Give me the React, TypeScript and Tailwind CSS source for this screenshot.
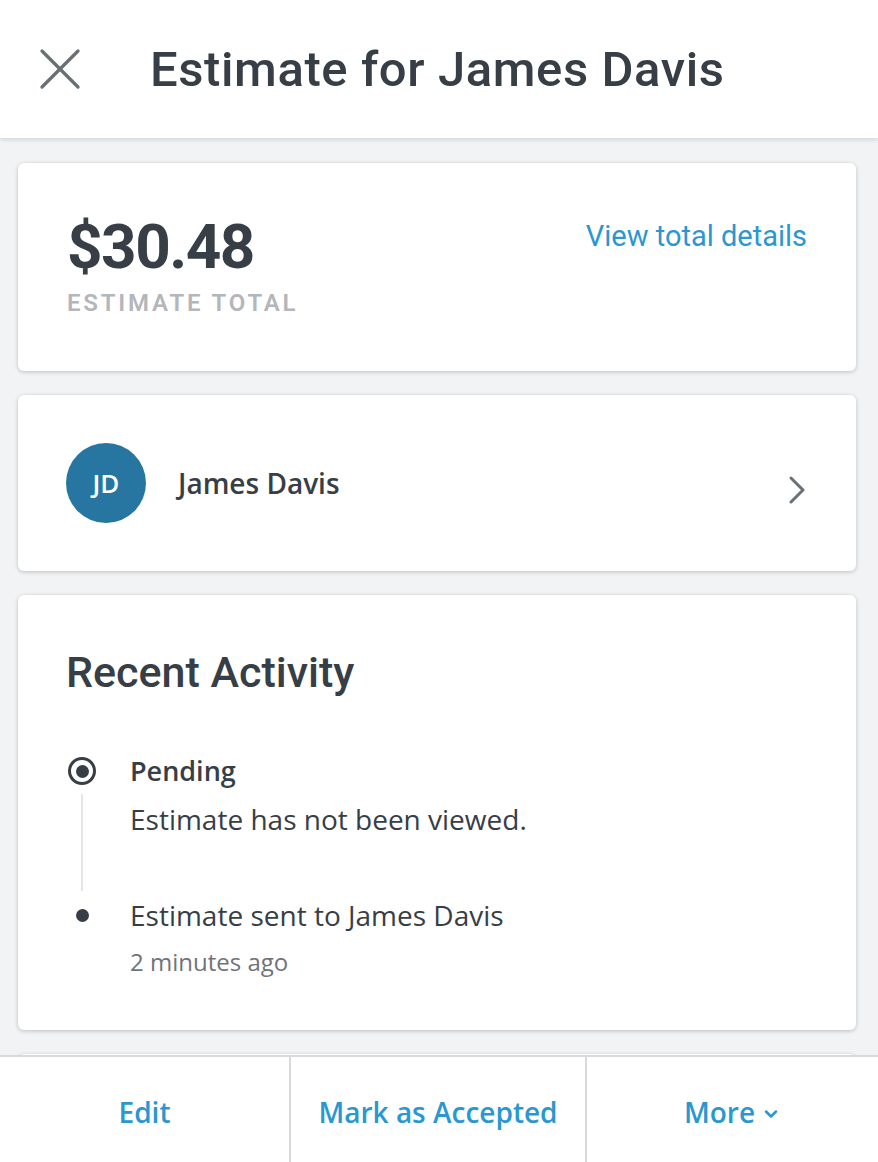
import { X, ChevronDown } from 'lucide-react';

const heading = { fontFamily: 'Roboto, "Liberation Sans", sans-serif' };
const body = { fontFamily: '"Open Sans", "Liberation Sans", sans-serif' };

function Card({ children, className = '' }: { children: React.ReactNode; className?: string }) {
  return (
    <div className={`bg-white rounded-[6px] shadow-[0_1px_4px_rgba(0,0,0,0.22)] ${className}`}>
      {children}
    </div>
  );
}

export default function App() {
  return (
    <div className="min-h-[1162px] bg-[#f2f3f5] text-[#373e46]" style={body}>
      <header className="h-[138px] bg-white flex items-center shadow-[0_2px_4px_rgba(0,0,0,0.12)] relative z-10">
        <X className="ml-[24px] w-[72px] h-[72px] text-[#6b7075] shrink-0" strokeWidth={1.1} />
        <h1 className="ml-[54px] text-[49px] font-medium leading-none tracking-[0.6px]" style={heading}>
          Estimate for James Davis
        </h1>
      </header>

      <main className="pl-[18px] pr-[22px] pt-[25px] pb-[140px] flex flex-col gap-[24px]">
        <Card className="h-[208px] pl-[49px] pr-[49px] pt-[53px] flex justify-between">
          <div>
            <div className="text-[62px] font-bold leading-none tracking-[-1.5px]" style={heading}>$30.48</div>
            <div className="mt-[13px] text-[24px] font-semibold tracking-[2.8px] text-[#b3b6ba] leading-none" style={heading}>
              ESTIMATE TOTAL
            </div>
          </div>
          <a className="text-[29px] text-[#2b97d0] leading-none mt-[6px]" style={heading}>View total details</a>
        </Card>

        <Card className="h-[176px] pl-[48px] pr-[50px] flex items-center">
          <div className="w-[80px] h-[80px] rounded-full bg-[#2776a2] flex items-center justify-center text-white text-[26px] font-semibold">
            JD
          </div>
          <div className="ml-[32px] text-[28px] font-semibold flex-1">James Davis</div>
          <svg width="18" height="28" viewBox="0 0 18 28" className="mt-[14px]">
            <polyline points="3,2 15,14 3,26" fill="none" stroke="#6b7075" strokeWidth="3" strokeLinecap="round" strokeLinejoin="round" />
          </svg>
        </Card>

        <Card className="h-[435px] px-[48px] pt-[56px]">
          <h2 className="text-[43px] font-medium leading-none" style={heading}>Recent Activity</h2>
          <div className="mt-[57px]">
            <div className="flex">
              <div className="w-[64px] flex flex-col items-center shrink-0 ml-[-16px]">
                <div className="w-[28px] h-[28px] rounded-full border-[3px] border-[#373e46] flex items-center justify-center mt-[6px]">
                  <div className="w-[13px] h-[13px] rounded-full bg-[#373e46]" />
                </div>
                <div className="w-[2px] h-[97px] bg-[#e4e5e8] mt-[9px]" />
              </div>
              <div className="ml-[16px]">
                <div className="text-[27px] font-semibold leading-[40px]">Pending</div>
                <div className="text-[28px] leading-[40px] mt-[8px]">Estimate has not been viewed.</div>
              </div>
            </div>
            <div className="flex mt-[-4px]">
              <div className="w-[64px] flex justify-center shrink-0 ml-[-16px]">
                <div className="w-[13px] h-[13px] rounded-full bg-[#373e46] mt-[22px]" />
              </div>
              <div className="ml-[16px] pt-[8px]">
                <div className="text-[28px] leading-[40px]">Estimate sent to James Davis</div>
                <div className="text-[24px] leading-[30px] mt-[12px] text-[#6f747a]">2 minutes ago</div>
              </div>
            </div>
          </div>
        </Card>

        <Card className="h-[200px]">{null}</Card>
      </main>

      <footer className="fixed bottom-0 left-0 right-0 h-[107px] bg-white border-t-2 border-[#d7d9dc] grid grid-cols-[289px_296px_1fr] z-20">
        <button className="text-[28px] font-semibold text-[#2b97d0] pt-[4px]">Edit</button>
        <button className="text-[28px] font-semibold text-[#2b97d0] border-l-2 border-[#d7d9dc] pt-[4px]">
          Mark as Accepted
        </button>
        <button className="text-[28px] font-semibold text-[#2b97d0] border-l-2 border-[#d7d9dc] flex items-center justify-center gap-[6px] pt-[4px]">
          More
          <ChevronDown className="w-[20px] h-[20px] mt-[4px]" strokeWidth={3} />
        </button>
      </footer>
    </div>
  );
}
